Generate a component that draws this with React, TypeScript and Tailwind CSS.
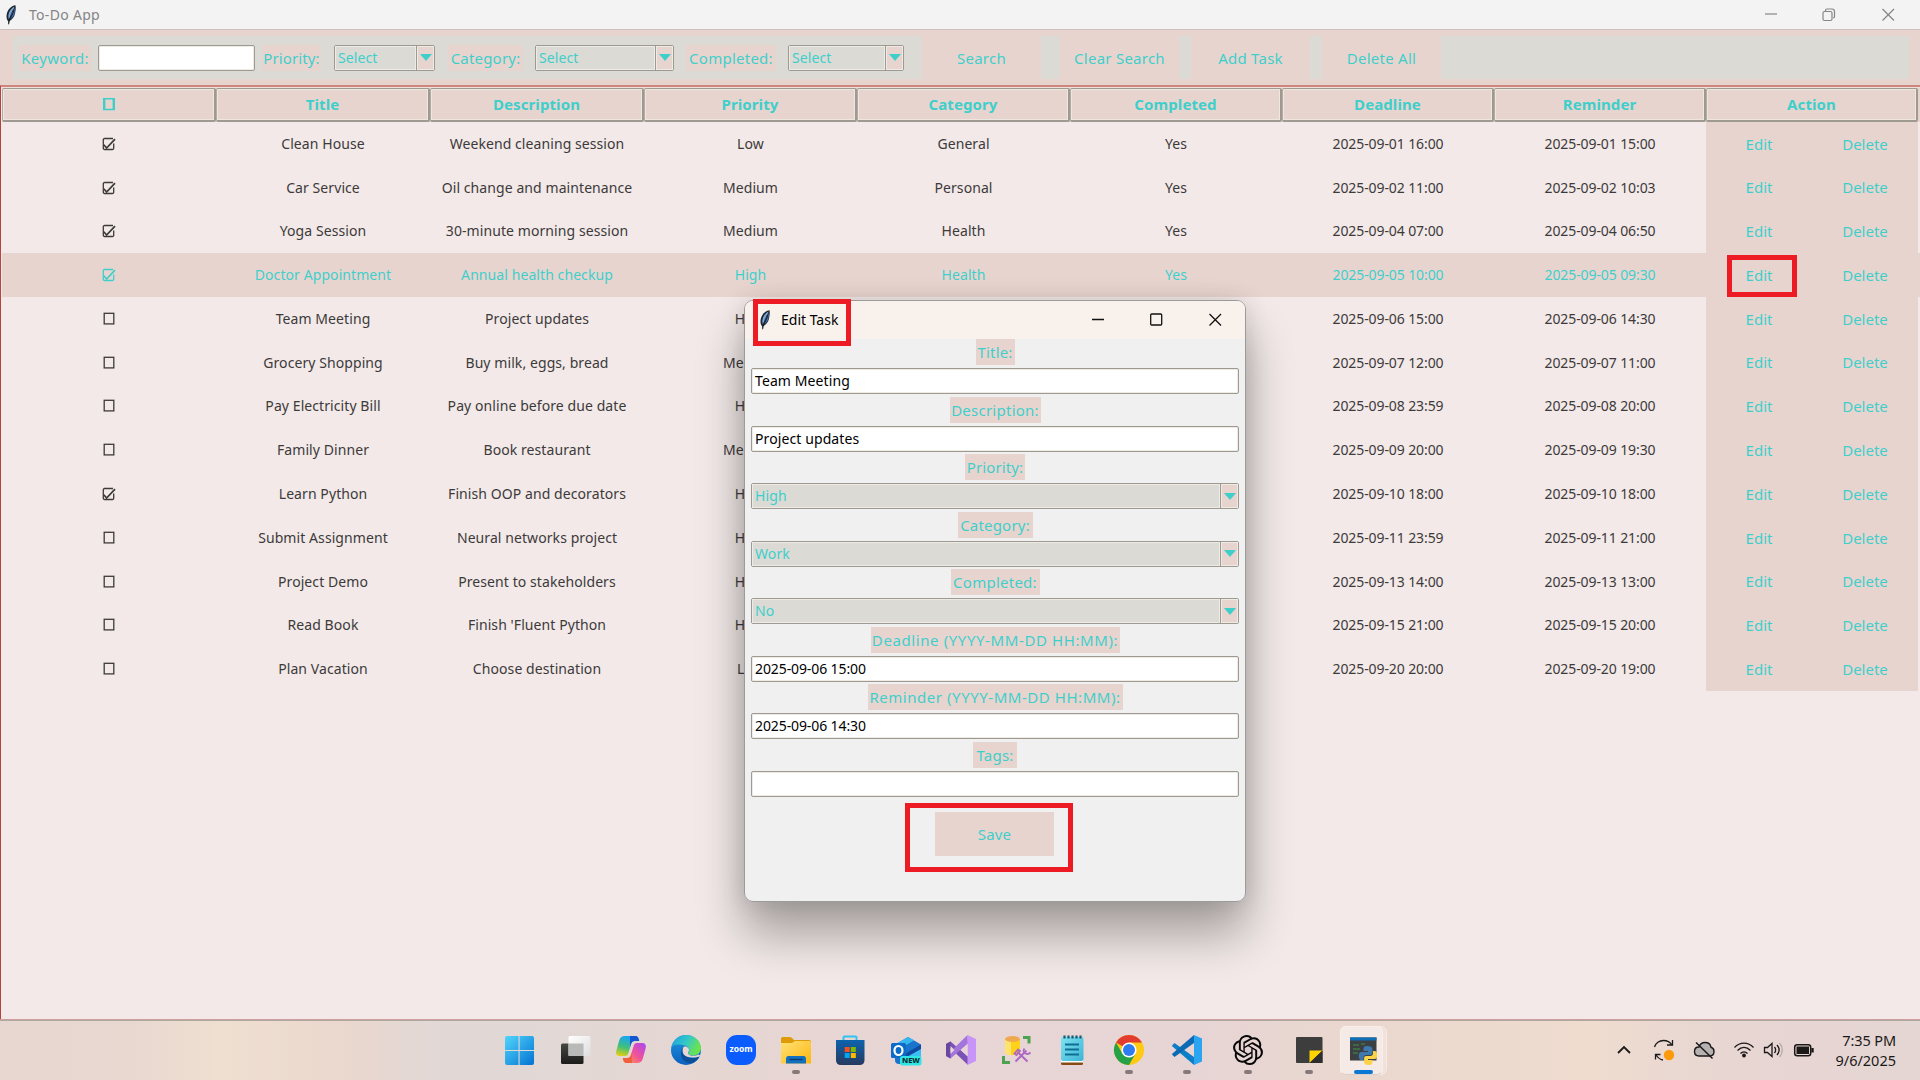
import React from "react";
import { SiOpenai } from "react-icons/si";

const TEAL = "text-[#3fcfcb]";

type Task = {
  done: boolean;
  title: string;
  description: string;
  priority: string;
  category: string;
  completed: string;
  deadline: string;
  reminder: string;
};

const t = (
  done: boolean,
  title: string,
  description: string,
  priority: string,
  category: string,
  completed: string,
  deadline: string,
  reminder: string
): Task => ({ done, title, description, priority, category, completed, deadline, reminder });

const tasks: Task[] = [
  t(true, "Clean House", "Weekend cleaning session", "Low", "General", "Yes", "2025-09-01 16:00", "2025-09-01 15:00"),
  t(true, "Car Service", "Oil change and maintenance", "Medium", "Personal", "Yes", "2025-09-02 11:00", "2025-09-02 10:03"),
  t(true, "Yoga Session", "30-minute morning session", "Medium", "Health", "Yes", "2025-09-04 07:00", "2025-09-04 06:50"),
  t(true, "Doctor Appointment", "Annual health checkup", "High", "Health", "Yes", "2025-09-05 10:00", "2025-09-05 09:30"),
  t(false, "Team Meeting", "Project updates", "High", "", "", "2025-09-06 15:00", "2025-09-06 14:30"),
  t(false, "Grocery Shopping", "Buy milk, eggs, bread", "Medium", "", "", "2025-09-07 12:00", "2025-09-07 11:00"),
  t(false, "Pay Electricity Bill", "Pay online before due date", "High", "", "", "2025-09-08 23:59", "2025-09-08 20:00"),
  t(false, "Family Dinner", "Book restaurant", "Medium", "", "", "2025-09-09 20:00", "2025-09-09 19:30"),
  t(true, "Learn Python", "Finish OOP and decorators", "High", "", "", "2025-09-10 18:00", "2025-09-10 18:00"),
  t(false, "Submit Assignment", "Neural networks project", "High", "", "", "2025-09-11 23:59", "2025-09-11 21:00"),
  t(false, "Project Demo", "Present to stakeholders", "High", "", "", "2025-09-13 14:00", "2025-09-13 13:00"),
  t(false, "Read Book", "Finish 'Fluent Python", "High", "", "", "2025-09-15 21:00", "2025-09-15 20:00"),
  t(false, "Plan Vacation", "Choose destination", "Low", "", "", "2025-09-20 20:00", "2025-09-20 19:00"),
];

const GRID = "grid grid-cols-[214px_214px_214px_213px_213px_212px_212px_212px_212px]";

function Feather() {
  return (
    <svg width="12" height="22" viewBox="0 0 12 22">
      <path d="M10.500 1.200C6 1.500 2.200 6 1.600 11c-.3 2.600.2 4.600 1.500 6.200l.3 4.200.9-4.200c3-1.500 5-4.200 5.700-7.600.6-2.900 1-5.600.5-8.400z" fill="#1e2530" />
      <path d="M9.400 2.600C6.300 4 4 7.500 3.400 11c-.2 1.600 0 3 .4 4.200C6.500 11.500 8.400 7 9.400 2.600z" fill="#7aa7d8" />
      <path d="M9.800 3.200c-.4 4.500-2.200 9-5.200 12.400 2.700-1.500 4.300-3.700 4.900-6.600.5-2 .6-4 .3-5.800z" fill="#3b76c4" />
      <path d="M8.500 5.500C6.800 9 4.800 13 3.700 20" stroke="#10151c" strokeWidth=".8" fill="none" />
    </svg>
  );
}

function CheckBox({ checked }: { checked: boolean }) {
  return (
    <svg width="14" height="16" viewBox="0 0 14 16" fill="none" stroke="currentColor" strokeWidth="1.300">
      {checked ? (
        <>
          <path d="M11.700 7.500v4.800a1.200 1.200 0 0 1-1.200 1.200H2.500a1.200 1.200 0 0 1-1.200-1.200V3.700a1.200 1.200 0 0 1 1.200-1.200h8.500" />
          <path d="M1.800 8.800l2.800 3.200L13 3.200" strokeWidth="1.700" />
        </>
      ) : (
        <rect x="2.200" y="2.300" width="9.600" height="10.600" />
      )}
    </svg>
  );
}

function Label({ children, className = "tracking-[0.2px]" }: { children: React.ReactNode; className?: string }) {
  return (
    <div className={`flex h-[26px] items-center justify-center whitespace-nowrap bg-[#e8d4cf] pt-px text-[15px] leading-none ${TEAL} ${className}`}>
      {children}
    </div>
  );
}

function Entry({ value = "", date = false, className = "" }: { value?: string; date?: boolean; className?: string }) {
  return (
    <div
      className={`flex h-[26px] items-center whitespace-nowrap rounded-[2px] border border-[#9e9a91] bg-white pb-px pl-[3px] text-[14px] text-black shadow-[inset_0_0_0_1px_#eeebe7] ${date ? "tracking-[-0.1px]" : "tracking-[0.1px]"} ${className}`}
    >
      {value}
    </div>
  );
}

function Combo({ value, className = "" }: { value: string; className?: string }) {
  return (
    <div className={`flex h-[26px] rounded-[2px] border border-[#9e9a91] bg-[#dbdad4] text-[14px] ${TEAL} ${className}`}>
      <div className="flex flex-1 items-center border border-[#eeebe7] pb-px pl-[2px] tracking-[0.1px]">{value}</div>
      <div className="flex w-[18px] items-center justify-center border-l border-[#9e9a91] bg-[#e8d4cf] shadow-[inset_0_0_0_1px_#eeebe7]">
        <div className="h-0 w-0 border-x-[6px] border-t-[7px] border-x-transparent border-t-[#3fcfcb]" />
      </div>
    </div>
  );
}

function ToolButton({ children, className = "" }: { children: React.ReactNode; className?: string }) {
  return (
    <button className={`flex h-[44px] items-center justify-center bg-[#e8d4cf] pt-px text-[15px] tracking-[0.25px] ${TEAL} ${className}`}>
      {children}
    </button>
  );
}

function Toolbar() {
  return (
    <div className="h-[56px] shrink-0 border-t border-[#cfc0bc] bg-[#e8d4cf] pl-[13px] pr-[11px] pt-[6px]">
      <div className="flex h-[43px] items-center bg-[#dbdad4] pl-[6px]">
        <Label className="w-[72px] tracking-[0.3px]">Keyword:</Label>
        <Entry className="ml-[7px] w-[157px]" />
        <Label className="ml-[7px] w-[59px] tracking-[0.1px]">Priority:</Label>
        <Combo value="Select" className="ml-[13px] w-[101px]" />
        <Label className="ml-[13px] w-[75px] tracking-[0.2px]">Category:</Label>
        <Combo value="Select" className="ml-[12px] w-[139px]" />
        <Label className="ml-[12px] w-[90px] tracking-[0.25px]">Completed:</Label>
        <Combo value="Select" className="ml-[12px] w-[116px]" />
        <ToolButton className="ml-[18px] w-[119px]">Search</ToolButton>
        <ToolButton className="ml-[19px] w-[119px]">Clear Search</ToolButton>
        <ToolButton className="ml-[12px] w-[119px]">Add Task</ToolButton>
        <ToolButton className="ml-[12px] w-[119px]">Delete All</ToolButton>
      </div>
    </div>
  );
}

const headers = ["", "Title", "Description", "Priority", "Category", "Completed", "Deadline", "Reminder", "Action"];

function TaskTable() {
  return (
    <div className="flex-1 border-l border-t-2 border-[#b5443e] border-t-[#cd857c] bg-[#f2e9e8] pl-[1px]">
      <div className="bg-[#eee0dc] pt-px">
        <div className={`${GRID} h-[34px] bg-[#e8d4cf]`}>
          {headers.map((h, i) => (
            <div
              key={i}
              className={`flex items-center justify-center rounded-[2px] border border-b-2 border-r-2 border-[#9e9a91] border-l-[#b5aaa4] pb-px text-[15px] font-bold tracking-[0.1px] shadow-[inset_0_0_0_1px_#eee6e0] ${TEAL}`}
            >
              {i === 0 ? (
                <svg width="14" height="16" viewBox="0 0 14 16" fill="none" stroke="currentColor">
                  <path d="M2.200 2v12M11.800 2v12" strokeWidth="2.400" />
                  <path d="M1 2.700h12M1 13.500h12" strokeWidth="1.400" />
                </svg>
              ) : (
                h
              )}
            </div>
          ))}
        </div>
      </div>
      {tasks.map((task, i) => {
        const cells = [task.title, task.description, task.priority, task.category, task.completed, task.deadline, task.reminder];
        const selected = i === 3;
        return (
          <div
            key={i}
            className={`${GRID} h-[43.770px] text-[14px] ${selected ? "bg-[#e8d4cf] text-[#3fcfcb]" : "text-[#3d3a3a]"}`}
          >
            <div className="flex items-center justify-center">
              <CheckBox checked={task.done} />
            </div>
            {cells.map((c, j) => (
              <div
                key={j}
                className={`flex items-center justify-center whitespace-nowrap pb-px ${j > 4 ? "tracking-[-0.1px]" : "tracking-[0.08px]"}`}
              >
                {c}
              </div>
            ))}
            <div className={`grid grid-cols-2 bg-[#e8d4cf] text-[15px] ${TEAL}`}>
              <button className="flex items-center justify-center">Edit</button>
              <button className="flex items-center justify-center">Delete</button>
            </div>
          </div>
        );
      })}
    </div>
  );
}

function EditDialog() {
  return (
    <div className="absolute left-[744px] top-[300px] flex h-[602px] w-[502px] flex-col overflow-hidden rounded-[9px] border border-[#9d9a9a] bg-[#f0f0f0]">
      <div className="flex h-[38px] shrink-0 items-center bg-[#f9f1ec] pl-[14px]">
        <Feather />
        <span className="ml-[10px] pb-px text-[14px] text-black">Edit Task</span>
        <svg className="ml-auto mr-[23px]" width="130" height="14" viewBox="0 0 130 14" fill="none" stroke="#111" strokeWidth="1.300">
          <path d="M0 6.500h12" />
          <rect x="58.700" y="1" width="11" height="11" rx="1" />
          <path d="M117.500 1l11.500 11.500M129 1l-11.500 11.500" />
        </svg>
      </div>
      <div className="flex flex-col px-[6px]">
        <Field label="Title:" w="w-[39px] tracking-[0.2px]"><Entry value="Team Meeting" /></Field>
        <Field label="Description:" w="w-[91px] tracking-[0.25px]"><Entry value="Project updates" /></Field>
        <Field label="Priority:" w="w-[60px] tracking-[0.1px]"><Combo value="High" /></Field>
        <Field label="Category:" w="w-[75px] tracking-[0.2px]"><Combo value="Work" /></Field>
        <Field label="Completed:" w="w-[89px] tracking-[0.25px]"><Combo value="No" /></Field>
        <Field label="Deadline (YYYY-MM-DD HH:MM):" w="w-[249px] tracking-[0.6px]"><Entry date value="2025-09-06 15:00" /></Field>
        <Field label="Reminder (YYYY-MM-DD HH:MM):" w="w-[255px] tracking-[0.55px]"><Entry date value="2025-09-06 14:30" /></Field>
        <Field label="Tags:" w="w-[44px] tracking-[0.2px]"><Entry /></Field>
      </div>
      <button className={`ml-[190px] mt-[13px] flex h-[44px] w-[119px] items-center justify-center bg-[#e8d4cf] pt-px text-[15px] tracking-[0.2px] ${TEAL}`}>
        Save
      </button>
    </div>
  );
}

function Field({ label, w, children }: { label: string; w: string; children: React.ReactNode }) {
  return (
    <div className="flex h-[57.500px] flex-col">
      <Label className={`mx-auto mb-[3px] shrink-0 ${w}`}>{label}</Label>
      {children}
    </div>
  );
}

function Icon({ children }: { children: React.ReactNode }) {
  return (
    <svg width="30" height="30" viewBox="0 0 30 30" className="overflow-visible">
      {children}
    </svg>
  );
}

function TaskItem({ children, className = "", running = false }: { children: React.ReactNode; className?: string; running?: boolean }) {
  return (
    <div className={`flex h-[39px] w-[30px] shrink-0 flex-col items-center justify-between ${className}`}>
      {children}
      {running && <div className="h-[4px] w-[8px] rounded-full bg-[#857a79]" />}
    </div>
  );
}

function Taskbar() {
  return (
    <div className="flex h-[60px] items-start bg-[linear-gradient(90deg,#e8d6d1_0%,#e9d8d0_7%,#efdfd0_11.5%,#ead7ce_18%,#e1d8d6_23%,#e1d8d5_27%,#e6d6d2_38%,#e8d5d5_50%,#e7d4d5_62%,#ead8cf_71%,#efdccf_83%,#e9d7d2_88%,#e7d5d4_94%,#e4d6d2_100%)] pl-[504px] pt-[15px] shadow-[inset_0_1px_0_#aeaaa3]">
      <svg width="0" height="0">
        <defs>
          <linearGradient id="win" x1="0" y1="0" x2="1" y2="1"><stop stopColor="#50d5fc" /><stop offset="1" stopColor="#0473d2" /></linearGradient>
          <linearGradient id="dark" x1="0" y1="0" x2="0" y2="1"><stop stopColor="#454742" /><stop offset="1" stopColor="#1c1c1a" /></linearGradient>
          <linearGradient id="lite" x1="0" y1="0" x2="1" y2="1"><stop stopColor="#fff" /><stop offset="1" stopColor="#dedede" /></linearGradient>
          <linearGradient id="cpA" x1=".3" y1="0" x2="0" y2="1"><stop stopColor="#1aa6f0" /><stop offset=".5" stopColor="#3fc07a" /><stop offset="1" stopColor="#fbd104" /></linearGradient>
          <linearGradient id="cpB" x1="1" y1="0" x2="0" y2="1"><stop stopColor="#a847f5" /><stop offset=".5" stopColor="#f0529a" /><stop offset="1" stopColor="#ffa13f" /></linearGradient>
          <linearGradient id="edgeA" x1="0" y1="0" x2="1" y2=".4"><stop stopColor="#1a9de0" /><stop offset=".55" stopColor="#35c8c8" /><stop offset="1" stopColor="#6be34e" /></linearGradient>
          <linearGradient id="edgeB" x1="0" y1="0" x2="0" y2="1"><stop stopColor="#1d97dd" /><stop offset="1" stopColor="#0b60c0" /></linearGradient>
          <linearGradient id="fold" x1="0" y1="0" x2="1" y2="1"><stop stopColor="#ffe177" /><stop offset="1" stopColor="#fdb70f" /></linearGradient>
          <linearGradient id="store" x1="0" y1="0" x2="0" y2="1"><stop stopColor="#0d63ae" /><stop offset="1" stopColor="#26395f" /></linearGradient>
          <linearGradient id="note" x1="0" y1="0" x2="1" y2="1"><stop stopColor="#7fe3f2" /><stop offset="1" stopColor="#3db4d4" /></linearGradient>
        </defs>
      </svg>
      <TaskItem>
        <Icon><path fill="url(#win)" d="M1 3q0-2 2-2h11.500v14H1zM15.600 1H28q2 0 2 2v12H15.600zM1 16h13.500v14H3q-2 0-2-2zM15.600 16H30v12q0 2-2 2H15.600z" /></Icon>
      </TaskItem>
      <TaskItem className="ml-[26px]">
        <Icon>
          <rect x="1" y="8.500" width="22.500" height="20.500" rx="1.500" fill="url(#dark)" />
          <rect x="8.500" y="1" width="22" height="20" rx="1.500" fill="url(#lite)" />
          <path d="M8.500 8.500h15V21h-15z" fill="#b9b9b8" />
        </Icon>
      </TaskItem>
      <TaskItem className="ml-[26px]">
        <Icon>
          <path d="M9 1h10.500c2.500 0 3.200 2.500 3.700 5h-4.500c-2 0-3 1-3.600 3l-2.700 9c-.6 2-1.200 3-3.400 3H4c-3 0-4.500-2-3.700-5l3-11C4.200 2.500 6 1 9 1z" fill="url(#cpA)" />
          <path d="M14 1h5.500c2.500 0 3.200 2.500 3.700 5h-4.500c-2 0-3 1-3.600 3l-1 3z" fill="#1457d0" />
          <path d="M21 28H10.500c-2.500 0-3.200-2.500-3.700-5h4.500c2 0 3-1 3.600-3l2.700-9c.6-2 1.200-3 3.400-3h5c3 0 4.500 2 3.700 5l-3 11c-.9 2.500-2.700 4-5.700 4z" fill="url(#cpB)" />
          <path d="M16 28h-5.500c-2.500 0-3.200-2.500-3.700-5h4.500c2 0 3-1 3.600-3l.9-3z" fill="#f0603c" />
        </Icon>
      </TaskItem>
      <TaskItem className="ml-[25px]">
        <Icon>
          <circle cx="15" cy="15" r="15" fill="url(#edgeB)" />
          <path d="M.5 12C2 5 8 0 15 0c8.500 0 15 6 15 13 0 5-4 7.500-8 7.500-3.500 0-5.500-1.500-4.500-3 1.500-2 .8-6-3.500-7C8.500 9 3.500 9 .5 12z" fill="url(#edgeA)" />
          <path d="M12.500 12c-3.500 3-4.500 14 5.500 16 4 .5 8-2 10-5.500.3-.7-.3-1-1-.7-6 2.500-13 1.200-14.500-4-.6-2 0-4 1.500-5.500z" fill="#0c4f98" />
          <path d="M12.500 12c2-1.500 6 .5 5.500 3.500-.2 1-1.200 1.800-.9 3 .8 2.500 6 3.200 10.900 1l1.300 1.500c-5 2.500-14 2-16.600-1.500-1.700-2.500-1.200-5.700-.2-7.500z" fill="#e7d6d4" />
        </Icon>
      </TaskItem>
      <TaskItem className="ml-[25px]">
        <div className="flex h-[30px] w-[30px] items-center justify-center rounded-[11px] bg-[#0b5cff] pb-px text-[8.500px] font-bold leading-none text-white">zoom</div>
      </TaskItem>
      <TaskItem className="ml-[25px]" running>
        <Icon>
          <path d="M0 3.500Q0 2 1.500 2H9q1.500 0 2.500 1.500L13 5h15q2 0 2 2v5H0z" fill="#dc9b07" />
          <path d="M0 8h11l3-2h14.500q1.500 0 1.500 1.500V28.500H0z" fill="url(#fold)" />
          <path d="M5 28.500V24q0-3 2.500-3h15q2.500 0 2.500 3v4.500z" fill="#1270bf" />
          <path d="M8.500 24.500h13" stroke="#083e73" strokeWidth="1.400" />
        </Icon>
      </TaskItem>
      <TaskItem className="ml-[24px]">
        <Icon>
          <path d="M8.500 6V2.500q0-1 1-1h11q1 0 1 1V6" fill="none" stroke="#2ec3f2" strokeWidth="2" />
          <path d="M1 5h28.500v20q0 5-5 5H6q-5 0-5-5z" fill="url(#store)" />
          <path d="M9.700 12h5v5h-5z" fill="#f25022" /><path d="M15.800 12h5v5h-5z" fill="#7fba00" />
          <path d="M9.700 18h5v5h-5z" fill="#00a4ef" /><path d="M15.800 18h5v5h-5z" fill="#ffb900" />
        </Icon>
      </TaskItem>
      <TaskItem className="ml-[26px]">
        <div className="relative h-[30px] w-[30px]">
          <Icon>
            <path d="M4 9.500L17 2l13 7.500V26q0 3-3 3H8q-4 0-4-4z" fill="#1a74cb" />
            <path d="M4 9.500L17 2l6 3.300L9 14z" fill="#35b6ef" />
            <path d="M30 9.500L12 20l18 8z" fill="#0e4aa0" />
            <path d="M30 14L14 23v5h16z" fill="#3bc0f3" />
            <rect x="0" y="8" width="15" height="15" rx="1.500" fill="#0a6bc9" />
            <ellipse cx="7.500" cy="15.500" rx="4" ry="4.500" fill="none" stroke="#fff" strokeWidth="2.200" />
            <rect x="9" y="21" width="21.500" height="9.500" rx="2.500" fill="#30e5e3" />
          </Icon>
          <span className="absolute left-[11px] top-[21px] text-[7.500px] font-extrabold leading-[9px] text-[#04262c]">NEW</span>
        </div>
      </TaskItem>
      <TaskItem className="ml-[25px]">
        <Icon>
          <path d="M4.500 6.500L22 21.500V30L0 9z" fill="#7a52b5" />
          <path d="M0 21L21.500 0 22 8.500 4.500 23.500z" fill="#a374dc" />
          <path d="M0 9l4.500-2.500v17L0 21z" fill="#6a479f" />
          <path d="M21.500 0L30 4v22l-8.500 4z" fill="#c795f7" />
          <path d="M15 15l6.500-6v12.500z" fill="#e7d6d4" />
          <path d="M4.500 11l4 4-4 4z" fill="#e7d6d4" />
        </Icon>
      </TaskItem>
      <TaskItem className="ml-[25px]">
        <Icon>
          <path d="M4 4v13c0 4 15 4 15 0V4z" fill="#ffd21a" /><path d="M4 4v13c0 2 3 3 6 3V4z" fill="#ffe36d" />
          <ellipse cx="11.500" cy="4" rx="7.500" ry="3" fill="#f0a850" />
          <path d="M22 2.500h6v6M2.500 21v6.500H9" stroke="#4ea352" strokeWidth="3" fill="none" />
          <path d="M14.500 26.500l11-11M16.500 17l10 9.500" stroke="#ad68c4" strokeWidth="2" fill="none" />
          <path d="M13.500 18.500l3.500-4 2 1.500-3.500 4zM23.500 13.500c-1.500 2-1 4 1 5s3.500.5 5-1" stroke="#ad68c4" strokeWidth="1.800" fill="none" />
        </Icon>
      </TaskItem>
      <TaskItem className="ml-[26px]">
        <Icon>
          <rect x="4" y="26" width="22" height="4" rx="1.500" fill="#8a4a14" /><rect x="4" y="25" width="22" height="2.500" fill="#fff" />
          <rect x="4" y="2" width="22.500" height="24" rx="2" fill="url(#note)" />
          <path d="M8 9.500h14M8 14.500h14M8 19.500h14" stroke="#0e6f93" strokeWidth="1.800" />
          <path d="M7.500.5v3M11.500.5v3M15.500.5v3M19.500.5v3M23.500.5v3" stroke="#155a72" strokeWidth="2.200" />
        </Icon>
      </TaskItem>
      <TaskItem className="ml-[27px]" running>
        <Icon>
          <circle cx="15" cy="15" r="15" fill="#fdc913" />
          <path d="M15 15L2 7.500A15 15 0 0 1 28 7.500H15z" fill="#e33b2e" />
          <path d="M2 7.500A15 15 0 0 0 15 30l6.500-11.300L8.500 18.700z" fill="#26a148" />
          <circle cx="15" cy="15" r="7.600" fill="#fff" /><circle cx="15" cy="15" r="6" fill="#2f7bf0" />
        </Icon>
      </TaskItem>
      <TaskItem className="ml-[28px]" running>
        <Icon>
          <path d="M0 10.500l2.500-2.500L22 22v8L.5 11.500z" fill="#0d7fc9" />
          <path d="M0 19.500L2.500 22 22 8V0L.5 18.500z" fill="#0a6bb5" />
          <path d="M22 0l8 3.500v23L22 30z" fill="#2ba5f2" />
        </Icon>
      </TaskItem>
      <TaskItem className="ml-[31px]" running>
        <SiOpenai size={30} color="#080808" />
      </TaskItem>
      <TaskItem className="ml-[31px]" running>
        <Icon>
          <rect x="2" y="2" width="26.500" height="26" rx="1" fill="#3d3d3e" />
          <path d="M15.500 28V15.500h13z" fill="#ffd500" />
          <path d="M15.500 28l13-12.500V28z" fill="#2e2e2f" />
        </Icon>
      </TaskItem>
      <div className="relative ml-[16px] -mt-[9px] h-[49px] w-[47px] shrink-0">
        <div className="h-[49px] w-[47px] rounded-[6px] border border-[#f6eae5] bg-[#f0e1da]" />
        <div className="absolute left-0 top-0 flex h-[49px] w-[43px] flex-col items-center justify-between rounded-[6px] border border-[#f9efea] border-b-[#ddcdc7] bg-[#f5eae5] pt-[9px]">
          <svg width="30" height="30" viewBox="-1 0 30 30" className="overflow-visible">
            <rect x="2" y="1.500" width="26.500" height="23" fill="#3c4043" /><rect x="2" y="1.500" width="26.500" height="3" fill="#0d6fb8" />
            <path d="M5 9h6M5 13h7M5 17h5M13 8h4" stroke="#3e9447" strokeWidth="1.200" />
            <path d="M19 10c-3 0-3.500 1.500-3.500 3v2H20v1h-6.500c-1.800 0-2.700 1.600-2.700 4s1 4 2.700 4h2v-2.500c0-1.600 1.200-2.500 2.600-2.500h4.300c1.300 0 2-.8 2-2v-4c0-2-1.800-3-5.400-3z" fill="#3d78ae" />
            <path d="M21 29c3 0 3.500-1.500 3.500-3v-2H20v-1h6.500c1.800 0 2.700-1.600 2.700-4s-1-4-2.700-4h-1.500v2.500c0 1.600-1.200 2.500-2.600 2.500h-4.300c-1.300 0-2 .8-2 2v4c0 2 1.300 3 4.900 3z" fill="#fbd349" />
          </svg>
          <div className="ml-[4px] h-[4px] w-[19px] rounded-full bg-[#0878d4]" />
        </div>
      </div>
      <div className="ml-auto flex h-[30px] items-center pr-[24px]">
        <svg width="200" height="24" viewBox="1616 1038 200 24" fill="none" stroke="#1b1918" strokeWidth="1.500">
          <path d="M1618 1053l6-6 6 6" strokeWidth="1.800" />
          <path d="M1654.500 1047c1-4 5-6.500 9-6.500 3.500 0 6.500 1.500 8.500 4.500M1672.500 1040v5h-5.500M1655.500 1059.500v-5h5M1656 1055c2 3 4 4.500 7 5" strokeWidth="1.300" />
          <circle cx="1669" cy="1055" r="5.200" fill="#fc9a0c" stroke="none" />
          <path d="M1699 1056c-3 0-4.500-2-4.500-4.500 0-3 2-4.500 4.500-4.500 1-3 3-4.500 6-4.500s5.500 1.800 6 4.800c2 .5 3 2 3 4.200 0 2.800-2 4.500-4.500 4.500z" fill="#b6b1b1" strokeWidth="1.400" />
          <path d="M1696 1042.500l16.500 16" />
          <path d="M1734.500 1047.500c5.500-5.800 13.500-5.800 19 0M1737.500 1050.500c4-4 9-4 13 0M1740.500 1053.500c2-2 5-2 7 0" strokeWidth="1.300" />
          <circle cx="1744" cy="1055.500" r="1.900" fill="#1b1918" stroke="none" />
          <path d="M1764.500 1047.500h3l4.500-4v13l-4.500-4h-3zM1774.500 1047c1.300 1.800 1.300 4.400 0 6M1777 1045c2.600 3 2.600 7 0 10" strokeWidth="1.300" />
          <path d="M1779.500 1043c3.700 4 3.700 10 0 14" strokeWidth="1.300" stroke="#b8aaa8" />
          <rect x="1794.700" y="1044.700" width="16" height="11" rx="2.500" /><rect x="1796.500" y="1046.500" width="12.500" height="7.500" fill="#1b1918" stroke="none" />
          <path d="M1812.500 1048v4.500" strokeWidth="2.400" />
        </svg>
        <div className="w-[80px] text-right text-[14.500px] leading-[20px] text-[#1b1918]">
          <div className="tracking-[-0.1px]">7:35 PM</div>
          <div>9/6/2025</div>
        </div>
      </div>
    </div>
  );
}

export default function App() {
  return (
    <div className="relative flex h-[1080px] w-[1920px] flex-col overflow-hidden font-['Noto_Sans',sans-serif]">
      <div className="flex h-[1020px] flex-col border-b border-[#cf9d9a] bg-[#f2e9e8]">
        <div className="flex h-[29px] shrink-0 items-center bg-[#f3f3f3] pl-[5px]">
          <Feather />
          <span className="ml-[12px] text-[14px] tracking-[0.3px] text-[#858585]">To-Do App</span>
          <svg className="ml-auto mr-[24px]" width="132" height="14" viewBox="0 0 132 14" fill="none" stroke="#858585" strokeWidth="1.200">
            <path d="M1 6h12" />
            <rect x="59" y="3.500" width="9" height="9" rx="1.500" />
            <path d="M61.500 3V2.500Q61.500 1 63 1h5q2.500 0 2.500 2.500v5q0 1.500-1.500 1.500" />
            <path d="M118.500 1l11.500 11.500M130 1L118.500 12.500" />
          </svg>
        </div>
        <Toolbar />
        <TaskTable />
      </div>
      <Taskbar />

      <div className="absolute left-[744px] top-[300px] h-[602px] w-[502px] rounded-[9px] shadow-[0_32px_48px_0_rgba(0,0,0,0.32),0_0_24px_0_rgba(0,0,0,0.12)]" />
      <EditDialog />
      <div className="absolute left-[753px] top-[299px] h-[47px] w-[98px] border-[5px] border-[#ed1c24]" />
      <div className="absolute left-[905px] top-[803px] h-[69px] w-[168px] border-[5px] border-[#ed1c24]" />
      <div className="absolute left-[1727px] top-[255px] h-[42px] w-[70px] border-[5px] border-[#ed1c24]" />
    </div>
  );
}
